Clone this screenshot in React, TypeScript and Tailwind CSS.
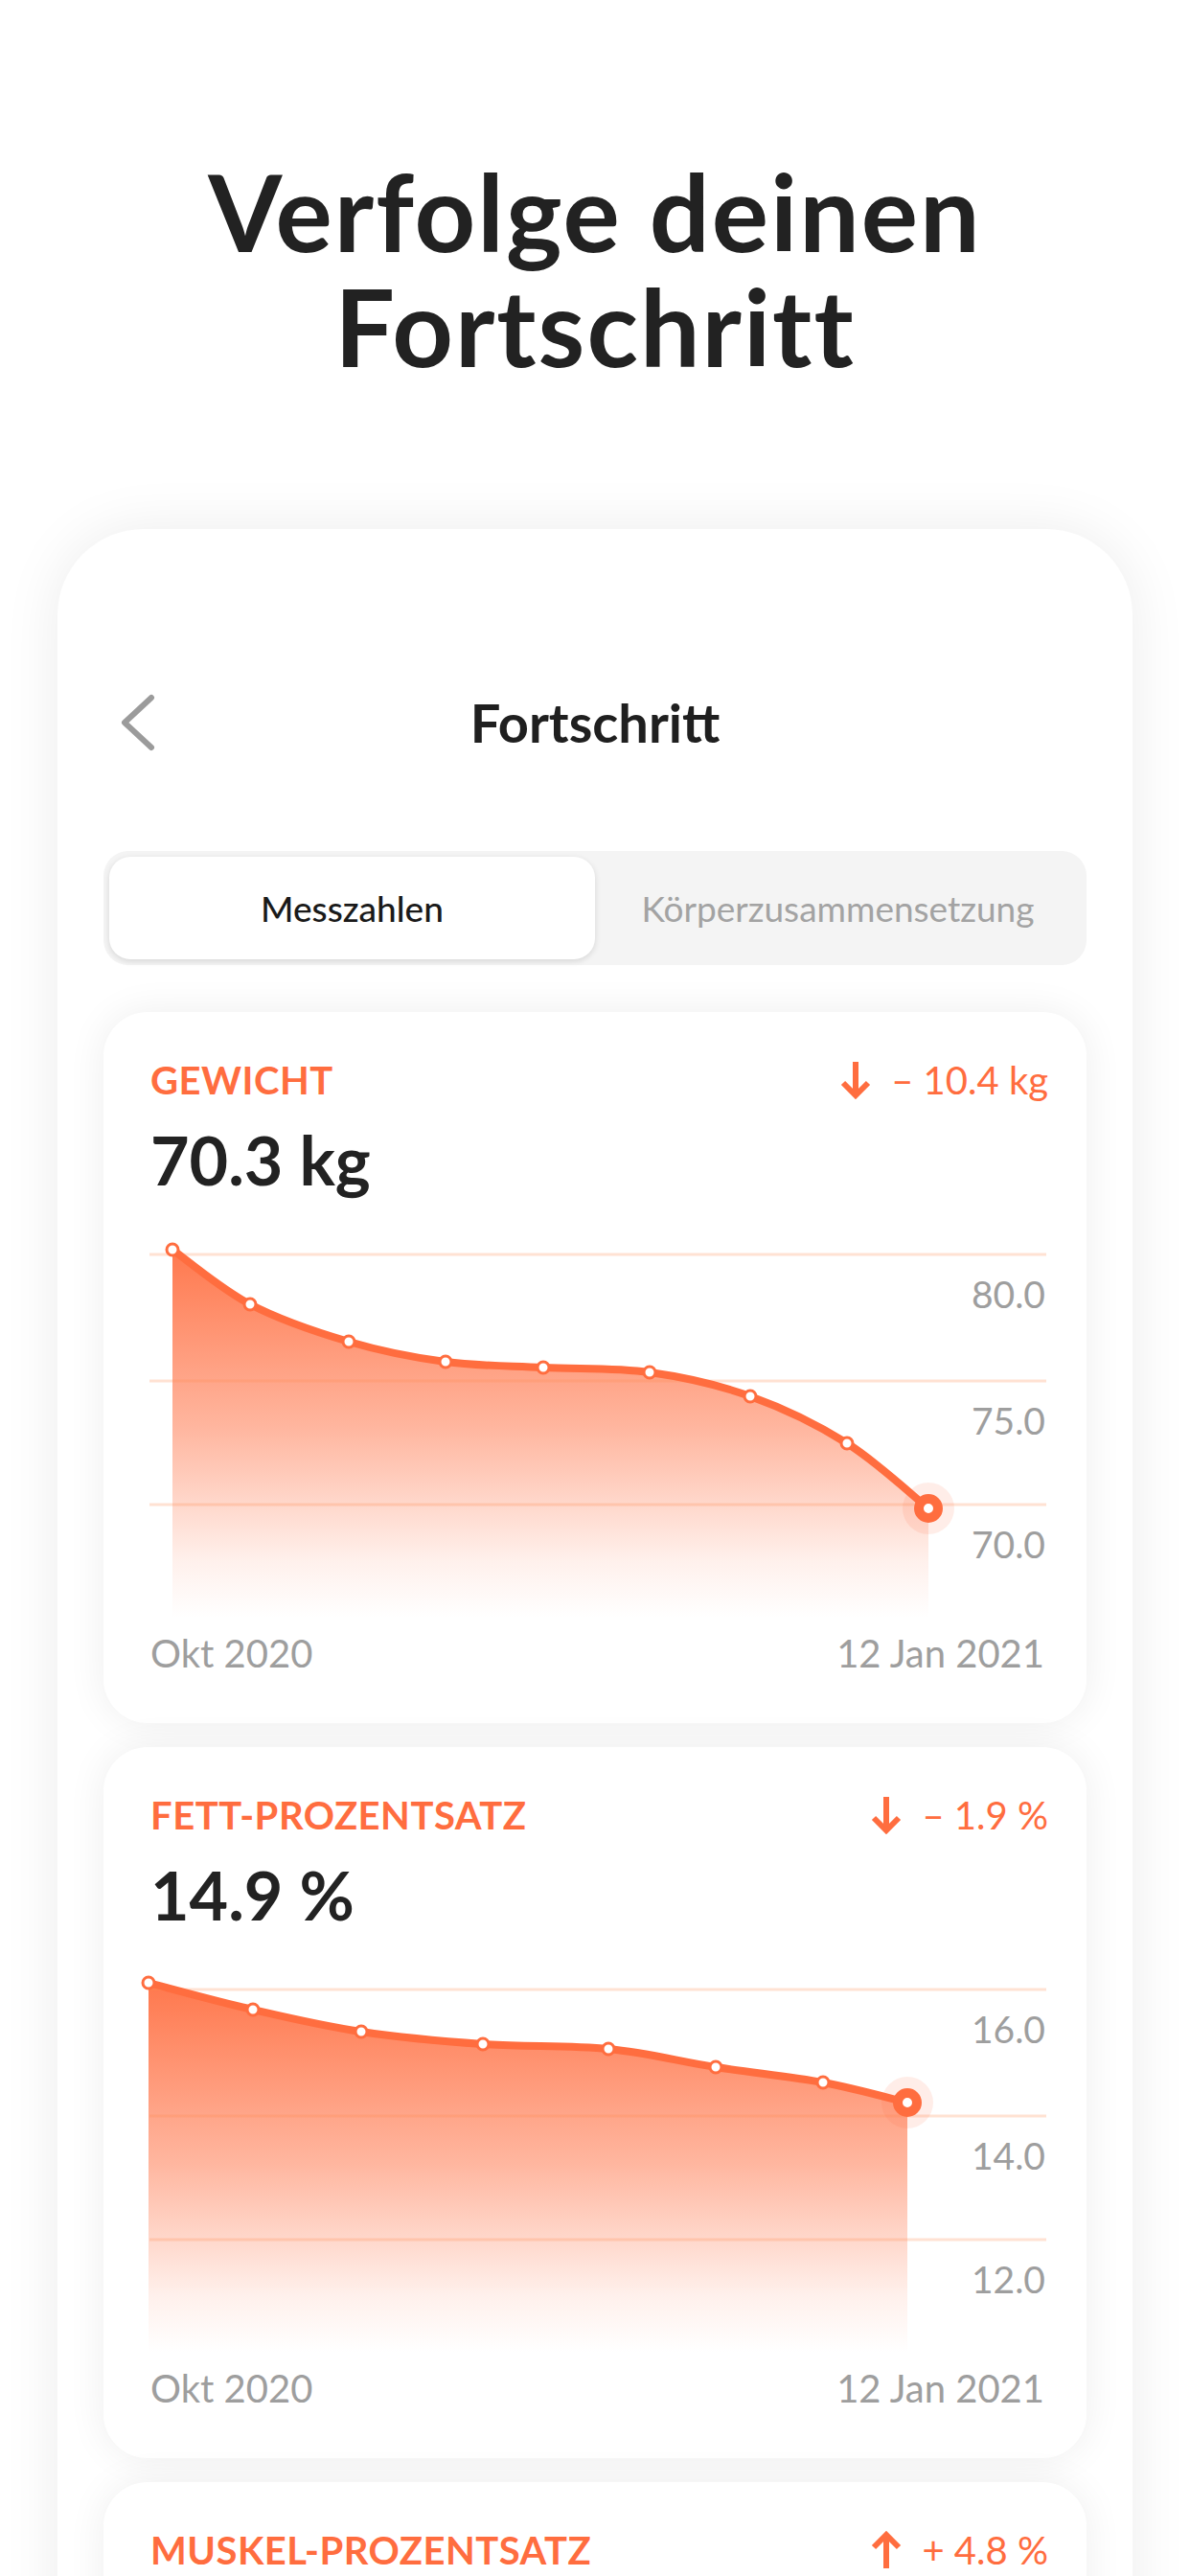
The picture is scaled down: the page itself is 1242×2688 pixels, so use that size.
import React from "react";

const ORANGE = "#ff6d3f";

type Pt = [number, number];

type Metric = {
  id: string;
  title: string;
  value?: string;
  delta: string;
  up: boolean;
  labels?: string[];
  points?: Pt[];
};

const metrics: Metric[] = [
  {
    id: "gewicht",
    title: "GEWICHT",
    value: "70.3 kg",
    delta: "– 10.4 kg",
    up: false,
    labels: ["80.0", "75.0", "70.0"],
    points: [
      [72, 52],
      [153, 109],
      [256, 148],
      [357, 169],
      [459, 175],
      [570, 180],
      [675, 205],
      [776, 254],
      [861, 322],
    ],
  },
  {
    id: "fett",
    title: "FETT-PROZENTSATZ",
    value: "14.9 %",
    delta: "– 1.9 %",
    up: false,
    labels: ["16.0", "14.0", "12.0"],
    points: [
      [47, 50],
      [156, 78],
      [269, 101],
      [396, 114],
      [527, 119],
      [639, 138],
      [751, 154],
      [839, 175],
    ],
  },
  // only the header of this one is on screen
  {
    id: "muskel",
    title: "MUSKEL-PROZENTSATZ",
    delta: "+ 4.8 %",
    up: true,
  },
];

const smoothPath = (pts: Pt[]) => {
  let d = `M${pts[0][0]},${pts[0][1]}`;
  for (let i = 0; i < pts.length - 1; i++) {
    const p0 = pts[i - 1] || pts[i];
    const p1 = pts[i];
    const p2 = pts[i + 1];
    const p3 = pts[i + 2] || p2;
    const c1x = p1[0] + (p2[0] - p0[0]) / 6;
    const c1y = p1[1] + (p2[1] - p0[1]) / 6;
    const c2x = p2[0] - (p3[0] - p1[0]) / 6;
    const c2y = p2[1] - (p3[1] - p1[1]) / 6;
    d += ` C${c1x},${c1y} ${c2x},${c2y} ${p2[0]},${p2[1]}`;
  }
  return d;
};

const Arrow = ({ up }: { up: boolean }) => (
  <svg width="34" height="40" viewBox="0 0 34 40" className={up ? "rotate-180" : ""}>
    <path d="M17 1 V36 M4 23 L17 36 L30 23" fill="none" stroke={ORANGE} strokeWidth="6" />
  </svg>
);

const Chart = ({ id, labels, points }: { id: string; labels: string[]; points: Pt[] }) => {
  const line = smoothPath(points);
  const first = points[0];
  const last = points[points.length - 1];
  const fill = `${line} L${last[0]},436 L${first[0]},436 Z`;
  const grid = [57, 189, 318];
  return (
    <svg width="1028" height="440" viewBox="0 0 1028 440" className="block">
      <defs>
        <linearGradient id={`fill-${id}`} x1="0" y1="40" x2="0" y2="436" gradientUnits="userSpaceOnUse">
          <stop offset="0" stopColor={ORANGE} stopOpacity="0.95" />
          <stop offset="0.5" stopColor={ORANGE} stopOpacity="0.5" />
          <stop offset="0.85" stopColor={ORANGE} stopOpacity="0.1" />
          <stop offset="1" stopColor={ORANGE} stopOpacity="0" />
        </linearGradient>
      </defs>
      <path d={fill} fill={`url(#fill-${id})`} />
      {grid.map((y) => (
        <line key={y} x1="48" x2="984" y1={y} y2={y} stroke="rgba(255,140,80,0.25)" strokeWidth="3" />
      ))}
      {labels.map((t, i) => (
        <text
          key={t}
          x="983"
          y={grid[i] + 56}
          textAnchor="end"
          fill="#9e9e9e"
          fontSize="39"
          fontFamily="Lato, 'Noto Sans', sans-serif"
        >
          {t}
        </text>
      ))}
      <path d={line} fill="none" stroke={ORANGE} strokeWidth="8" strokeLinecap="round" />
      {points.slice(0, -1).map(([x, y]) => (
        <circle key={x} cx={x} cy={y} r="6" fill="#fff" stroke={ORANGE} strokeWidth="3" />
      ))}
      <circle cx={last[0]} cy={last[1]} r="27" fill={ORANGE} fillOpacity="0.12" />
      <circle cx={last[0]} cy={last[1]} r="10" fill="#fff" stroke={ORANGE} strokeWidth="10" />
    </svg>
  );
};

const MetricCard = ({ m }: { m: Metric }) => (
  <div className="bg-white rounded-[46px] shadow-[0_0_40px_rgba(0,0,0,0.07)] pt-[47px] pb-[49px] shrink-0">
    <div className="flex items-center justify-between pl-[49px] pr-[40px] h-[48px]">
      <span className="text-[40px] leading-[48px] font-bold tracking-[0.5px] text-[#ff6d3f]">{m.title}</span>
      <div className="flex items-center gap-[20px]">
        <Arrow up={m.up} />
        <span className="text-[40px] leading-[48px] text-[#ff6d3f]">{m.delta}</span>
      </div>
    </div>
    {m.value && m.points && m.labels ? (
      <>
        <div className="mt-[17px] pl-[49px] text-[70px] leading-[84px] font-bold text-[#222]">{m.value}</div>
        <Chart id={m.id} labels={m.labels} points={m.points} />
        <div className="mt-[9px] flex justify-between pl-[49px] pr-[44px] text-[40px] leading-[48px] text-[#9e9e9e]">
          <span>Okt 2020</span>
          <span>12 Jan 2021</span>
        </div>
      </>
    ) : (
      <div className="h-[200px]" />
    )}
  </div>
);

export default function App() {
  return (
    <div className="w-[1242px] h-[2688px] overflow-hidden bg-white flex flex-col font-['Lato','Noto_Sans',sans-serif]">
      <h1 className="pt-[160px] text-center text-[111px] leading-[120px] font-bold tracking-[2px] text-[#222]">
        Verfolge deinen
        <br />
        Fortschritt
      </h1>

      <div className="mt-[152px] mx-[60px] flex-1 bg-white rounded-t-[90px] shadow-[0_0_60px_rgba(0,0,0,0.08)] px-[48px] pt-[166px]">
        <div className="relative h-[72px] flex items-center justify-center">
          <svg width="40" height="60" viewBox="0 0 40 60" className="absolute left-[16px] top-[6px]">
            <path d="M34 4 L6 30 L34 56" fill="none" stroke="#9b9b9b" strokeWidth="6" strokeLinecap="round" strokeLinejoin="round" />
          </svg>
          <span className="text-[56px] font-bold text-[#1f1f1f]">Fortschritt</span>
        </div>

        <div className="mt-[98px] h-[119px] rounded-[26px] bg-[#f4f4f4] p-[6px] flex">
          <div className="flex-1 rounded-[22px] bg-white shadow-[0_2px_6px_rgba(0,0,0,0.12)] flex items-center justify-center text-[37px] font-medium text-[#1a1a1a]">
            Messzahlen
          </div>
          <div className="flex-1 flex items-center justify-center text-[37px] text-[#a3a3a3]">
            Körperzusammensetzung
          </div>
        </div>

        <div className="mt-[49px] flex flex-col gap-[25px]">
          {metrics.map((m) => (
            <MetricCard key={m.id} m={m} />
          ))}
        </div>
      </div>
    </div>
  );
}
